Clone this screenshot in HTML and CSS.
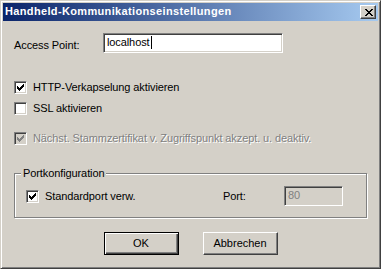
FILE: index.html
```html
<!DOCTYPE html>
<html lang="de">
<head>
  <meta charset="UTF-8" />
  <title>Handheld-Kommunikationseinstellungen</title>
  <link rel="stylesheet" href="styles.css">
</head>
<body>
  <div class="window">
    <div class="titlebar">
      <span class="title">Handheld-Kommunikationseinstellungen</span>
      <button class="close-btn" type="button">
        <svg width="8" height="7" viewBox="0 0 8 7"><path d="M0 0h2v1h-2zM6 0h2v1h-2zM1 1h2v1h-2zM5 1h2v1h-2zM2 2h4v1h-4zM3 3h2v1h-2zM2 4h4v1h-4zM1 5h2v1h-2zM5 5h2v1h-2zM0 6h2v1h-2zM6 6h2v1h-2z" fill="#000"/></svg>
      </button>
    </div>
    <div class="content">
      <div class="field-row">
        <label class="field-label">Access Point:</label>
        <div class="edit">localhost<span class="caret"></span></div>
      </div>

      <div class="check-row http-row">
        <span class="check"><svg width="7" height="7" viewBox="0 0 7 7"><path d="M0 2h1v3h-1zM1 3h1v3h-1zM2 4h1v3h-1zM3 3h1v3h-1zM4 2h1v3h-1zM5 1h1v3h-1zM6 0h1v3h-1z" fill="#000"/></svg></span>
        <span>HTTP-Verkapselung aktivieren</span>
      </div>
      <div class="check-row ssl-row">
        <span class="check"></span>
        <span>SSL aktivieren</span>
      </div>
      <div class="check-row cert-row disabled">
        <span class="check"><svg width="7" height="7" viewBox="0 0 7 7"><path d="M0 2h1v3h-1zM1 3h1v3h-1zM2 4h1v3h-1zM3 3h1v3h-1zM4 2h1v3h-1zM5 1h1v3h-1zM6 0h1v3h-1z" fill="#808080"/></svg></span>
        <span>Nächst. Stammzertifikat v. Zugriffspunkt akzept. u. deaktiv.</span>
      </div>

      <fieldset class="group">
        <legend>Portkonfiguration</legend>
        <div class="group-row">
          <div class="check-row">
            <span class="check"><svg width="7" height="7" viewBox="0 0 7 7"><path d="M0 2h1v3h-1zM1 3h1v3h-1zM2 4h1v3h-1zM3 3h1v3h-1zM4 2h1v3h-1zM5 1h1v3h-1zM6 0h1v3h-1z" fill="#000"/></svg></span>
            <span>Standardport verw.</span>
          </div>
          <span class="port-label">Port:</span>
          <div class="edit port-edit">80</div>
        </div>
      </fieldset>

      <div class="buttons">
        <button class="btn default" type="button">OK</button>
        <button class="btn" type="button">Abbrechen</button>
      </div>
    </div>
  </div>
</body>
</html>
```

FILE: styles.css
```css
body {
  margin: 0;
  font-family: "Liberation Sans", Arial, sans-serif;
  font-size: 11px;
  line-height: 13px;
  letter-spacing: -0.1px;
  color: #000;
}

.window {
  width: 381px;
  height: 269px;
  box-sizing: border-box;
  background: #d4d0c8;
  border: 1px solid;
  border-color: #d4d0c8 #404040 #404040 #d4d0c8;
  box-shadow: inset 1px 1px #fff, inset -1px -1px #808080;
  padding: 2px;
}

.titlebar {
  height: 18px;
  display: flex;
  align-items: center;
  justify-content: space-between;
  padding: 0 2px 0 2px;
  background: linear-gradient(to right, #0a246a, #a6caf0);
}

.title {
  color: #fff;
  font-weight: bold;
  font-size: 11px;
  letter-spacing: 0.35px;
  padding-bottom: 2px;
}

.close-btn {
  width: 16px;
  height: 14px;
  box-sizing: border-box;
  padding: 0 0 0 2px;
  margin: 0;
  background: #d4d0c8;
  border: 1px solid;
  border-color: #fff #404040 #404040 #fff;
  box-shadow: inset -1px -1px #808080;
  display: flex;
  align-items: center;
  justify-content: center;
}

.close-btn svg {
  display: block;
}

.content {
  padding: 12px 11px 0 11px;
}

.field-row {
  display: flex;
  align-items: flex-start;
  height: 20px;
}

.field-label {
  width: 89px;
  padding-top: 6px;
}

.edit {
  width: 180px;
  height: 20px;
  box-sizing: border-box;
  background: #fff;
  border: 1px solid;
  border-color: #808080 #fff #fff #808080;
  box-shadow: inset 1px 1px #404040, inset -1px -1px #d4d0c8;
  padding: 2px 3px;
  white-space: nowrap;
}

.caret {
  display: inline-block;
  width: 1px;
  height: 13px;
  margin-left: 1px;
  background: #000;
  vertical-align: top;
}

.check-row {
  display: flex;
  align-items: center;
  gap: 6px;
  height: 13px;
}

.http-row {
  margin-top: 28px;
}

.ssl-row {
  margin-top: 8px;
}

.cert-row {
  margin-top: 17px;
}

.check {
  width: 13px;
  height: 13px;
  box-sizing: border-box;
  flex: none;
  background: #fff;
  border: 1px solid;
  border-color: #808080 #fff #fff #808080;
  box-shadow: inset 1px 1px #404040, inset -1px -1px #d4d0c8;
  display: flex;
  align-items: center;
  justify-content: center;
}

.check svg {
  display: block;
}

.disabled {
  color: #808080;
  text-shadow: 1px 1px 0 #fff;
}

.disabled .check {
  background: #d4d0c8;
}

.group {
  margin: 22px 0 0 0;
  padding: 6px 11px 11px 11px;
  height: 51px;
  box-sizing: border-box;
  border: 1px solid #808080;
  box-shadow: inset 1px 1px #fff, 1px 1px #fff;
}

.group legend {
  padding: 0 2px;
  margin-left: -5px;
  background: #d4d0c8;
}

.group-row {
  display: flex;
  align-items: center;
  height: 20px;
}

.group-row .check-row {
  width: 197px;
}

.port-label {
  width: 61px;
}

.port-edit {
  width: 59px;
  background: #d4d0c8;
  color: #808080;
}

.buttons {
  display: flex;
  justify-content: center;
  gap: 24px;
  margin-top: 14px;
}

.btn {
  width: 75px;
  height: 23px;
  box-sizing: border-box;
  margin: 0;
  padding: 0;
  font: inherit;
  color: #000;
  background: #d4d0c8;
  border: 1px solid;
  border-color: #fff #404040 #404040 #fff;
  box-shadow: inset -1px -1px #808080;
}

.btn.default {
  border: 1px solid #000;
  box-shadow: inset 1px 1px #fff, inset -1px -1px #404040, inset -2px -2px #808080;
}
```
